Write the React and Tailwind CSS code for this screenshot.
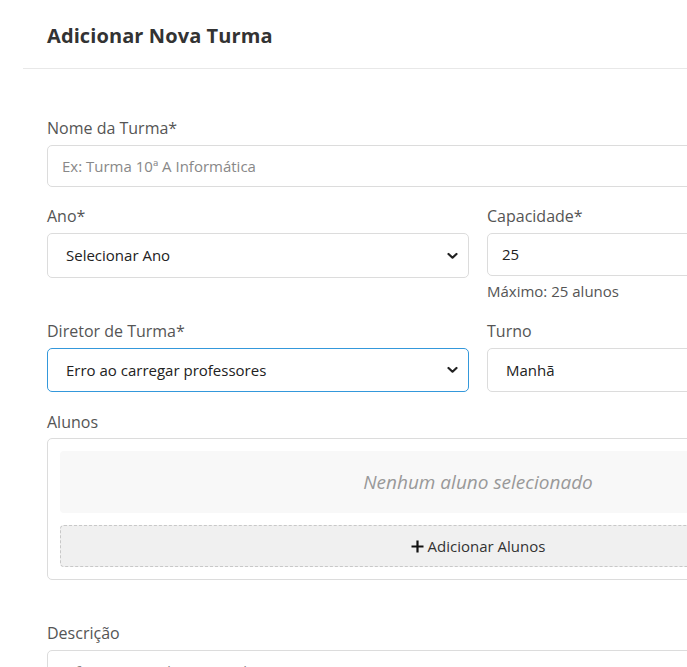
import React from "react";

const font = { fontFamily: '"Open Sans", "Noto Sans", sans-serif' };

function Chevron() {
  return (
    <svg
      className="pointer-events-none absolute right-[11px] top-1/2 -translate-y-1/2"
      width="11"
      height="7"
      viewBox="0 0 11 7"
      fill="none"
    >
      <path d="M1.5 1.5 L5.5 5.2 L9.5 1.5" stroke="#222" strokeWidth="2.2" strokeLinecap="round" strokeLinejoin="round" />
    </svg>
  );
}

function Label({ children, gap = "mb-[5px]" }) {
  return <label className={`block text-[16px] leading-6 text-[#555] ${gap}`}>{children}</label>;
}

function SelectBox({ value, focused, height = "h-[44px]" }) {
  return (
    <div className="relative">
      <div
        className={`flex ${height} items-center rounded-[5px] border bg-white pl-[18px] text-[15px] text-[#222] ${
          focused ? "border-[#3498db]" : "border-[#dcdcdc]"
        }`}
      >
        {value}
      </div>
      <Chevron />
    </div>
  );
}

export default function App() {
  return (
    <div className="h-screen w-screen overflow-hidden bg-white" style={font}>
      <div className="ml-[23px] w-[910px]">
        {/* Header */}
        <div className="border-b border-[#e8e8e8] px-6 pt-[22px] pb-[18px]">
          <h2 className="text-[20px] font-bold leading-7 tracking-[0.1px] text-[#333]">Adicionar Nova Turma</h2>
        </div>

        {/* Body */}
        <div className="px-6 pt-[47px]">
          <div className="mb-[17px]">
            <Label>Nome da Turma*</Label>
            <div className="flex h-[42px] items-center rounded-[5px] border border-[#dcdcdc] px-[14px] text-[15px] text-[#888]">
              Ex: Turma 10ª A Informática
            </div>
          </div>

          <div className="mb-[18px] grid grid-cols-2 gap-x-[18px]">
            <div>
              <Label>Ano*</Label>
              <SelectBox value="Selecionar Ano" height="h-[45px]" />
            </div>
            <div>
              <Label>Capacidade*</Label>
              <div className="flex h-[43px] items-center rounded-[5px] border border-[#dcdcdc] px-[14px] text-[15px] text-[#222]">
                25
              </div>
              <p className="mt-[5px] text-[15px] leading-5 text-[#555]">Máximo: 25 alunos</p>
            </div>
          </div>

          <div className="mb-[18px] grid grid-cols-2 gap-x-[18px]">
            <div>
              <Label>Diretor de Turma*</Label>
              <SelectBox value="Erro ao carregar professores" focused />
            </div>
            <div>
              <Label>Turno</Label>
              <SelectBox value="Manhã" />
            </div>
          </div>

          <div className="mb-[41px]">
            <Label gap="mb-[4px]">Alunos</Label>
            <div className="flex flex-col gap-3 rounded-[5px] border border-[#dcdcdc] p-3">
              <div className="flex h-[62px] items-center justify-center rounded-[4px] bg-[#f8f8f8] text-[19px] italic text-[#999]">
                Nenhum aluno selecionado
              </div>
              <button className="flex h-[42px] items-center justify-center gap-1 rounded-[4px] border border-dashed border-[#c8c8c8] bg-[#f0f0f0] text-[15px] text-[#333]">
                <svg width="13" height="13" viewBox="0 0 13 13">
                  <path d="M6.5 0.5 V12.5 M0.5 6.5 H12.5" stroke="#111" strokeWidth="2.2" />
                </svg>
                Adicionar Alunos
              </button>
            </div>
          </div>

          <div>
            <Label>Descrição</Label>
            <div className="h-[90px] rounded-[5px] border border-[#dcdcdc] px-[14px] pt-[10px] text-[15px] leading-5 text-[#888]">
              Informações adicionais sobre a turma
            </div>
          </div>
        </div>
      </div>
    </div>
  );
}
